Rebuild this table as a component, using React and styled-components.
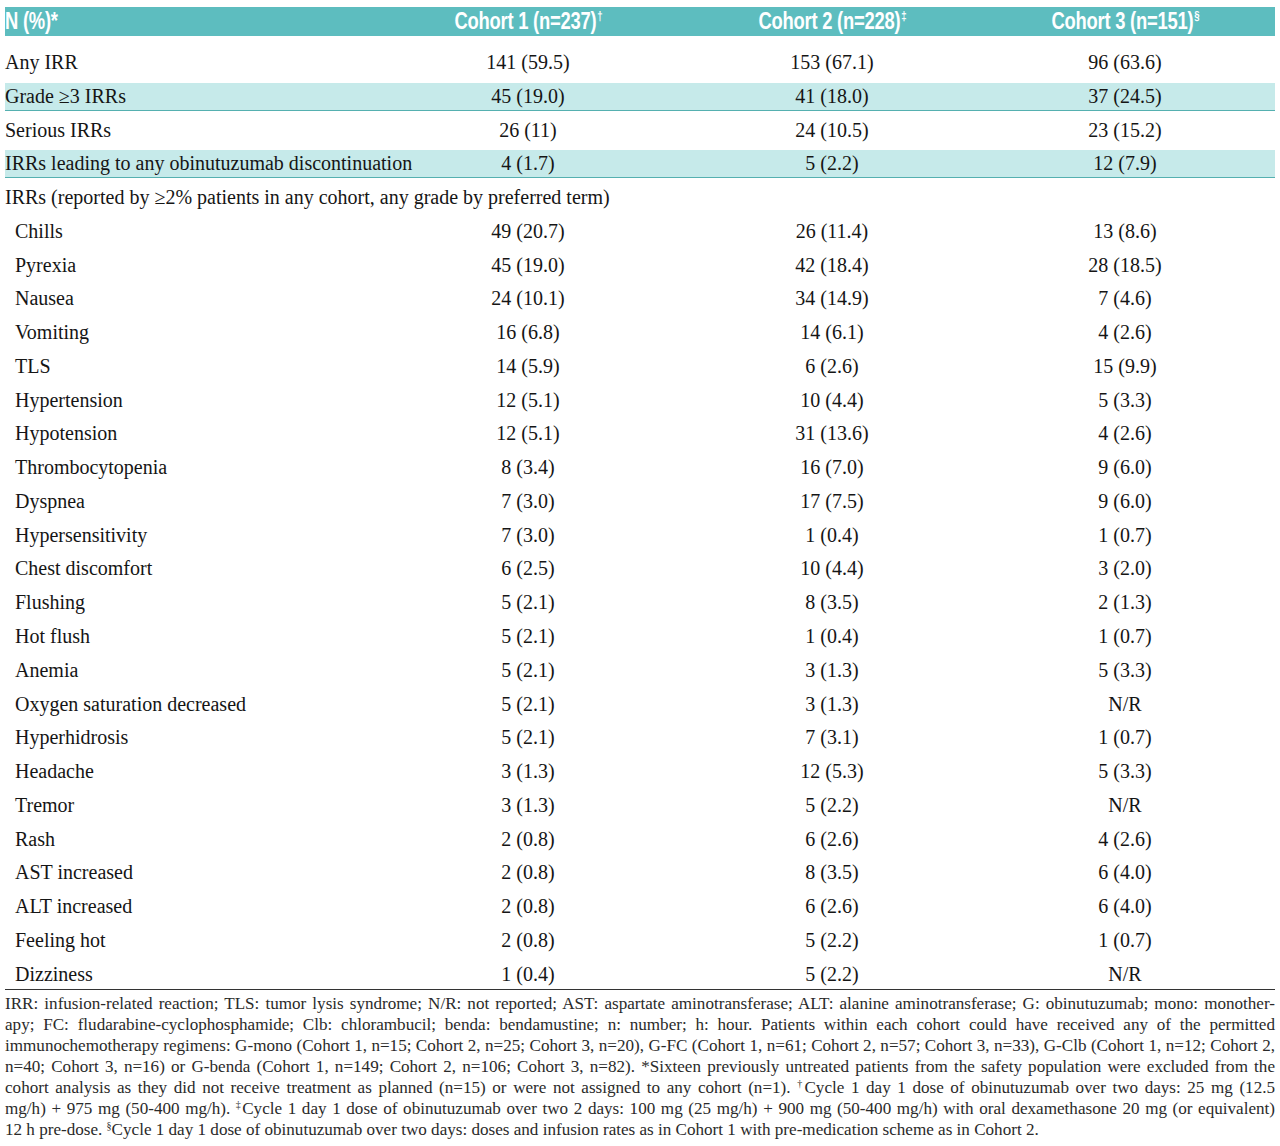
import React from "react";
import styled, { createGlobalStyle } from "styled-components";

const Global = createGlobalStyle`
  html, body { margin: 0; padding: 0; background: #ffffff; }
  body { width: 1280px; }
`;

const Page = styled.div`
  width: 1270px;
  padding: 7px 5px 0 5px;
  font-family: "Liberation Serif", "Times New Roman", serif;
  color: #151515;
`;

const cols = "373px 300px 308px 278px";

const HeaderBar = styled.div`
  display: grid;
  grid-template-columns: ${cols};
  height: 29px;
  align-items: center;
  background: #5dbdbf;
  color: #ffffff;
  font-family: "Liberation Sans", Arial, sans-serif;
  font-weight: 700;
`;

const HeadCell = styled.div`
  text-align: ${(p) => (p.$left ? "left" : "center")};
  white-space: nowrap;
  line-height: 29px;
`;

const HeadText = styled.span`
  display: inline-block;
  font-size: 23px;
  letter-spacing: -0.3px;
  transform: scaleX(0.8);
  transform-origin: ${(p) => (p.$left ? "left center" : "center center")};
  sup {
    font-size: 12px;
    vertical-align: 9px;
    line-height: 0;
    margin-left: 1px;
  }
`;

const Body = styled.div`
  display: flex;
  flex-direction: column;
  gap: 5.78px;
  margin-top: 13px;
`;

const Row = styled.div`
  display: grid;
  grid-template-columns: ${cols};
  height: 28px;
  box-sizing: border-box;
  align-items: center;
  font-size: 20px;
  background: ${(p) => (p.$shaded ? "#c6eaea" : "transparent")};
  border-bottom: 1.5px solid ${(p) => (p.$shaded ? "#55b0b0" : "transparent")};
`;

const Label = styled.div`
  padding-left: ${(p) => (p.$indent ? "10px" : "0")};
  white-space: nowrap;
  grid-column: ${(p) => (p.$span ? "1 / -1" : "auto")};
`;

const Value = styled.div`
  text-align: center;
  white-space: nowrap;
`;

const Divider = styled.div`
  border-top: 1px solid #333333;
`;

const Notes = styled.div`
  padding-top: 3px;
  font-family: "Liberation Serif", "Times New Roman", serif;
  font-size: 17.1px;
  line-height: 21px;
  color: #2a2a2a;
`;

const NoteLine = styled.div`
  white-space: nowrap;
  text-align: ${(p) => (p.$last ? "left" : "justify")};
  text-align-last: ${(p) => (p.$last ? "left" : "justify")};
  sup {
    font-size: 10px;
    vertical-align: 6px;
    line-height: 0;
  }
`;

const summary = [
  ["Any IRR", "141 (59.5)", "153 (67.1)", "96 (63.6)", false],
  ["Grade ≥3 IRRs", "45 (19.0)", "41 (18.0)", "37 (24.5)", true],
  ["Serious IRRs", "26 (11)", "24 (10.5)", "23 (15.2)", false],
  ["IRRs leading to any obinutuzumab discontinuation", "4 (1.7)", "5 (2.2)", "12 (7.9)", true],
];

const terms = [
  ["Chills", "49 (20.7)", "26 (11.4)", "13 (8.6)"],
  ["Pyrexia", "45 (19.0)", "42 (18.4)", "28 (18.5)"],
  ["Nausea", "24 (10.1)", "34 (14.9)", "7 (4.6)"],
  ["Vomiting", "16 (6.8)", "14 (6.1)", "4 (2.6)"],
  ["TLS", "14 (5.9)", "6 (2.6)", "15 (9.9)"],
  ["Hypertension", "12 (5.1)", "10 (4.4)", "5 (3.3)"],
  ["Hypotension", "12 (5.1)", "31 (13.6)", "4 (2.6)"],
  ["Thrombocytopenia", "8 (3.4)", "16 (7.0)", "9 (6.0)"],
  ["Dyspnea", "7 (3.0)", "17 (7.5)", "9 (6.0)"],
  ["Hypersensitivity", "7 (3.0)", "1 (0.4)", "1 (0.7)"],
  ["Chest discomfort", "6 (2.5)", "10 (4.4)", "3 (2.0)"],
  ["Flushing", "5 (2.1)", "8 (3.5)", "2 (1.3)"],
  ["Hot flush", "5 (2.1)", "1 (0.4)", "1 (0.7)"],
  ["Anemia", "5 (2.1)", "3 (1.3)", "5 (3.3)"],
  ["Oxygen saturation decreased", "5 (2.1)", "3 (1.3)", "N/R"],
  ["Hyperhidrosis", "5 (2.1)", "7 (3.1)", "1 (0.7)"],
  ["Headache", "3 (1.3)", "12 (5.3)", "5 (3.3)"],
  ["Tremor", "3 (1.3)", "5 (2.2)", "N/R"],
  ["Rash", "2 (0.8)", "6 (2.6)", "4 (2.6)"],
  ["AST increased", "2 (0.8)", "8 (3.5)", "6 (4.0)"],
  ["ALT increased", "2 (0.8)", "6 (2.6)", "6 (4.0)"],
  ["Feeling hot", "2 (0.8)", "5 (2.2)", "1 (0.7)"],
  ["Dizziness", "1 (0.4)", "5 (2.2)", "N/R"],
];

export default function App() {
  return (
    <>
      <Global />
      <Page>
        <HeaderBar>
          <HeadCell $left>
            <HeadText $left>N (%)*</HeadText>
          </HeadCell>
          <HeadCell>
            <HeadText>
              Cohort 1 (n=237)<sup>†</sup>
            </HeadText>
          </HeadCell>
          <HeadCell>
            <HeadText>
              Cohort 2 (n=228)<sup>‡</sup>
            </HeadText>
          </HeadCell>
          <HeadCell>
            <HeadText>
              Cohort 3 (n=151)<sup>§</sup>
            </HeadText>
          </HeadCell>
        </HeaderBar>
        <Body>
          {summary.map(([label, a, b, c, shaded]) => (
            <Row key={label} $shaded={shaded}>
              <Label>{label}</Label>
              <Value>{a}</Value>
              <Value>{b}</Value>
              <Value>{c}</Value>
            </Row>
          ))}
          <Row>
            <Label $span>
              IRRs (reported by ≥2% patients in any cohort, any grade by preferred term)
            </Label>
          </Row>
          {terms.map(([label, a, b, c]) => (
            <Row key={label}>
              <Label $indent>{label}</Label>
              <Value>{a}</Value>
              <Value>{b}</Value>
              <Value>{c}</Value>
            </Row>
          ))}
        </Body>
        <Divider />
        <Notes>
          <NoteLine>
            IRR: infusion-related reaction; TLS: tumor lysis syndrome; N/R: not reported; AST: aspartate aminotransferase; ALT: alanine aminotransferase; G: obinutuzumab; mono: monother-
          </NoteLine>
          <NoteLine>
            apy; FC: fludarabine-cyclophosphamide; Clb: chlorambucil; benda: bendamustine; n: number; h: hour. Patients within each cohort could have received any of the permitted
          </NoteLine>
          <NoteLine>
            immunochemotherapy regimens: G-mono (Cohort 1, n=15; Cohort 2, n=25; Cohort 3, n=20), G-FC (Cohort 1, n=61; Cohort 2, n=57; Cohort 3, n=33), G-Clb (Cohort 1, n=12; Cohort 2,
          </NoteLine>
          <NoteLine>
            n=40; Cohort 3, n=16) or G-benda (Cohort 1, n=149; Cohort 2, n=106; Cohort 3, n=82). *Sixteen previously untreated patients from the safety population were excluded from the
          </NoteLine>
          <NoteLine>
            cohort analysis as they did not receive treatment as planned (n=15) or were not assigned to any cohort (n=1). <sup>†</sup>Cycle 1 day 1 dose of obinutuzumab over two days: 25 mg (12.5
          </NoteLine>
          <NoteLine>
            mg/h) + 975 mg (50-400 mg/h). <sup>‡</sup>Cycle 1 day 1 dose of obinutuzumab over two 2 days: 100 mg (25 mg/h) + 900 mg (50-400 mg/h) with oral dexamethasone 20 mg (or equivalent)
          </NoteLine>
          <NoteLine $last>
            12 h pre-dose. <sup>§</sup>Cycle 1 day 1 dose of obinutuzumab over two days: doses and infusion rates as in Cohort 1 with pre-medication scheme as in Cohort 2.
          </NoteLine>
        </Notes>
      </Page>
    </>
  );
}
